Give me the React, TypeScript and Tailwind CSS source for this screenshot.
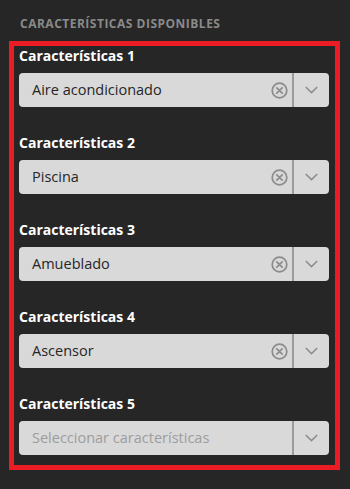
import React from 'react';

const features = [
  { label: 'Características 1', value: 'Aire acondicionado' },
  { label: 'Características 2', value: 'Piscina' },
  { label: 'Características 3', value: 'Amueblado' },
  { label: 'Características 4', value: 'Ascensor' },
  { label: 'Características 5', value: '' },
];

const ClearIcon = () => (
  <svg width="17" height="17" viewBox="0 0 17 17" fill="none">
    <circle cx="8.5" cy="8.5" r="7.3" stroke="#8c8c8c" strokeWidth="1.7" />
    <path d="M5.8 5.8 L11.2 11.2 M11.2 5.8 L5.8 11.2" stroke="#8c8c8c" strokeWidth="1.7" strokeLinecap="round" />
  </svg>
);

const Chevron = () => (
  <svg width="13" height="8" viewBox="0 0 13 8" fill="none">
    <path d="M0.8 1 L6.5 6.6 L12.2 1" stroke="#8c8c8c" strokeWidth="1.5" />
  </svg>
);

const FeatureSelect: React.FC<{ label: string; value: string }> = ({ label, value }) => (
  <div className="flex flex-col gap-[7px]">
    <div className="text-[14px] leading-5 font-bold text-white">{label}</div>
    <div className="flex h-[34px] items-stretch rounded-[4px] bg-[#d9d9d9]">
      <div
        className={`flex flex-1 items-center pl-[13px] text-[14.5px] ${
          value ? 'text-[#262626]' : 'text-[#9d9d9d]'
        }`}
      >
        {value || 'Seleccionar características'}
      </div>
      {value && (
        <div className="flex w-[26px] items-center justify-center">
          <ClearIcon />
        </div>
      )}
      <div className="w-[2px] bg-[#9c9c9c]" />
      <div className="flex w-[35px] items-center justify-center">
        <Chevron />
      </div>
    </div>
  </div>
);

export default function App() {
  return (
    <div
      className="h-[489px] w-[350px] bg-[#262626]"
      style={{ fontFamily: '"Open Sans", "Liberation Sans", sans-serif' }}
    >
      <div className="px-5 pt-4 text-[12px] leading-4 font-bold uppercase tracking-[0.5px] text-[#8a8a8a]">
        Características disponibles
      </div>
      <div className="ml-[9px] mt-[9px] w-[331px] border-[5px] border-[#ec1c24] pb-[10px] pl-[5px] pr-[6px]">
        <div className="flex flex-col gap-[26px]">
          {features.map((f) => (
            <FeatureSelect key={f.label} label={f.label} value={f.value} />
          ))}
        </div>
      </div>
    </div>
  );
}
